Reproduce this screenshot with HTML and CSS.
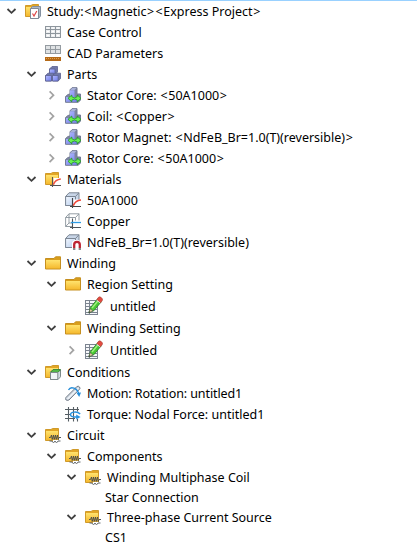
FILE: index.html
```html
<!DOCTYPE html>
<html lang="en">
<head>
<meta charset="utf-8">
<title>Study tree</title>
<link rel="stylesheet" href="styles.css">
</head>
<body>
<svg class="sprite" width="0" height="0" aria-hidden="true">
  <defs>
    <linearGradient id="gold" x1="0" y1="0" x2="0" y2="1"><stop offset="0" stop-color="#ffe36e"/><stop offset="1" stop-color="#f5b92e"/></linearGradient>
    <linearGradient id="blue" x1="0" y1="0" x2="1" y2="1"><stop offset="0" stop-color="#b4bcff"/><stop offset="1" stop-color="#6f7bea"/></linearGradient>
    <linearGradient id="face" x1="0" y1="0" x2="1" y2="1"><stop offset="0" stop-color="#f2f7ff"/><stop offset="1" stop-color="#b7cdec"/></linearGradient>
  </defs>
  <symbol id="open" viewBox="0 0 16 16"><path d="M3.5 6 7.5 9.8 11.5 6" fill="none" stroke="#404040" stroke-width="1.8"/></symbol>
  <symbol id="closed" viewBox="0 0 16 16"><path d="M5.6 4.3 9.5 8.2 5.6 12.1" fill="none" stroke="#a3a3a3" stroke-width="1.7"/></symbol>
  <symbol id="folder" viewBox="0 0 16 16"><path d="M.5 3.5H9L10.5 1.8H15.5V14H.5Z" fill="#d99e1c"/><path d="M.5 3.5H9L10.5 1.8H15.5V14H.5Z" fill="none" stroke="#c58f20"/><path d="M1 5H15V13.5H1Z" fill="url(#gold)"/></symbol>
  <symbol id="smallfolder" viewBox="0 0 16 16"><path d="M.5 2.5H6L7.5 1.5H13.5V13.5H.5Z" fill="#e2a625" stroke="#d09a2a"/><path d="M1 4H13V13H1Z" fill="url(#gold)"/></symbol>
  <symbol id="study" viewBox="0 0 16 16"><use href="#smallfolder"/><path d="M7.5 3.5H15.5V13L13.5 15.5H5.5V5.5Z" fill="#aeb9c6" stroke="#8390a0"/><path d="M5.5 5.5H13.5V15.5H5.5Z" fill="#fff" stroke="#7f8996"/><path d="M7.5 10.5 9 13 11.8 8" fill="none" stroke="#e04848" stroke-width="1.2"/></symbol>
  <symbol id="table" viewBox="0 0 16 16"><path d="M0 2H16V14H0Z" fill="#8e969d"/><path d="M1 3H5V5H1ZM6 3H10V5H6ZM11 3H15V5H11ZM1 6H5V9H1ZM6 6H10V9H6ZM11 6H15V9H11ZM1 10H5V13H1ZM6 10H10V13H6ZM11 10H15V13H11Z" fill="#eceef0"/><path d="M2 4H4M7 4H9M12 4H14M2 7.5H4M7 7.5H9M12 7.5H14M2 11.5H4M7 11.5H9M12 11.5H14" stroke="#fff"/></symbol>
  <symbol id="cad" viewBox="0 0 16 16"><path d="M0 0H16V9H0Z" fill="#949ba1"/><path d="M1 1H5V4H1ZM6 1H10V4H6ZM11 1H15V4H11ZM1 5H5V8H1ZM6 5H10V8H6ZM11 5H15V8H11Z" fill="#dfe2e4"/><path d="M0 12H16V16H0Z" fill="#b56a18"/><path d="M1 13.5H15" stroke="#e3a04c" stroke-width="1" stroke-dasharray="1 1"/></symbol>
  <symbol id="parts" viewBox="0 0 16 16"><g stroke="#5c6190" stroke-width=".8" stroke-linejoin="round"><path d="M4.5 3 7 .5H12.5V6L10 8.5H4.5Z" fill="#7079a8"/><path d="M4.5 3H10V8.5H4.5Z" fill="url(#blue)"/><path d="M.5 9.5 3 7.2H8.5V13L6.5 15H.5Z" fill="#7079a8"/><path d="M.5 9.5H6.5V15H.5Z" fill="url(#blue)"/><path d="M7.5 9.5 10 7.2H15.5V12.5L13.2 15H7.5Z" fill="#7079a8"/><path d="M7.5 9.5H13.2V15H7.5Z" fill="url(#blue)"/></g></symbol>
  <symbol id="part" viewBox="0 0 16 16"><path d="M.5 9.5 3 7.5 5 7V2.8L7 .7H12V7H15.5V13L13.3 15.3H.5Z" fill="#7c85a0" stroke="#727b96" stroke-linejoin="round"/><path d="M1 10H5V3.3H9.5V10H13V14.8H1Z" fill="url(#blue)"/><path d="M5.5 2.8 7.3 1.2H11.5L9.5 2.8Z" fill="#b9c0ee"/><path d="M3 11.3 6.8 8V9.8L9.5 10.8 12.2 9.8V8L16 11.3 12.2 14.8V13L9.5 12 6.8 13V14.8Z" fill="#6af052" stroke="#189018" stroke-width=".7"/></symbol>
  <symbol id="materials" viewBox="0 0 16 16"><use href="#smallfolder"/><path d="M8.5 7H16V14H8.5Z" fill="#fff"/><path d="M7.5 6V16M5 14.5H16" fill="none" stroke="#555" stroke-width="1.1"/><path d="M8.3 13.6Q10.3 8.6 15.8 8" fill="none" stroke="#f05040" stroke-width="1.6"/></symbol>
  <symbol id="cube" viewBox="0 0 16 16"><path d="M.6 4.5 4 .8H14V10L10.5 13.5H.6Z" fill="#c8d5e7" stroke="#7c8795"/><path d="M.6 4.5H10.5V13.5H.6Z" fill="url(#face)" stroke="#7c8795"/><path d="M10.5 4.5 14 .8" stroke="#7c8795"/></symbol>
  <symbol id="steel" viewBox="0 0 16 16"><use href="#cube"/><path d="M8.5 7.5H16V16H8.5Z" fill="#fff"/><path d="M7.5 6V16M5 14.5H16" fill="none" stroke="#444" stroke-width="1.1"/><path d="M8.3 13.6Q10.3 8.6 16 8" fill="none" stroke="#f14638" stroke-width="1.6"/></symbol>
  <symbol id="copper" viewBox="0 0 16 16"><path d="M.6 4.5 4 .8H14V10L10.5 13.5H.6V4.5H10.5V13.5M10.5 4.5 14 .8M4 .8V10H14M.6 13.5 4 10" fill="none" stroke="#8a949c" stroke-width=".9"/><path d="M8 7.5H16V16H8Z" fill="#fff"/><path d="M7.5 5.5V16M5 14.5H16" fill="none" stroke="#4c5358" stroke-width="1.1"/><path d="M6 9.5H16" stroke="#2e9de5" stroke-width="1.3"/></symbol>
  <symbol id="magnet" viewBox="0 0 16 16"><use href="#cube"/><path d="M7 8Q11 4 16 7.5V16H7Z" fill="#fff"/><path d="M9.2 14V10.6Q9.2 7.8 12 7.8T14.8 10.6V14" fill="none" stroke="#bd2534" stroke-width="2.3"/><path d="M9.2 14V16M14.8 14V16" stroke="#888" stroke-width="2.3"/></symbol>
  <symbol id="sheet" viewBox="0 0 18 20"><path d="M0 4H13V19H0Z" fill="#f6f7f9"/><path d="M0 4.5H13M0 7.5H13M0 10.5H13M0 13.5H13M0 16.5H13M0 18.5H13M.5 4V19M4.5 4V19M12.5 9V19" stroke="#7c8490" stroke-width="1"/><path d="M3.8 16.8 5.5 11.5 12.6 2.8 16.3 5.7 9 14.6Z" fill="#49c934" stroke="#267524" stroke-width=".8"/><path d="M7 12 14 3.6" stroke="#a4f181" stroke-width="1.4"/><path d="M3.8 16.8 5.2 12.8 8 15Z" fill="#f2d6a3" stroke="#555" stroke-width=".6"/><path d="M3.8 16.8 4.4 15.2 5.5 16Z" fill="#222"/><path d="M11.7 3.8 13.2 1.6Q14.2.2 16 1.3 18.4 3 17.2 4.8L15.5 6.8Z" fill="#e34c41" stroke="#a84539" stroke-width=".6"/><path d="M11.5 4 15.2 7" stroke="#ddd" stroke-width="1"/></symbol>
  <symbol id="conditions" viewBox="0 0 16 16"><use href="#smallfolder"/><path d="M5.5 8.3 8 5.7H15.5V12.8L13 15.5H5.5Z" fill="#d0dce2" stroke="#7c898a"/><path d="M5.5 8.3 8 5.7H15.5L13 8.3Z" fill="#5ac34f" stroke="#33852e"/><path d="M5.5 8.5H12.8V15.5H5.5Z" fill="#f0f5f6" stroke="#7c898a"/></symbol>
  <symbol id="motion" viewBox="0 0 16 16"><path d="M1 12.4 11.8 1.6Q13.4.6 14.5 2T14.4 4.4L4 15Q2 16 .8 14.7T1 12.4Z" fill="#cbd3dd" stroke="#68717d" stroke-width=".9"/><path d="M2.5 14 13.5 3" stroke="#f3f6fa" stroke-width="1.2"/><path d="M3.5 5Q5.2 1.7 9 3.2T14 9.5" fill="none" stroke="#248dda" stroke-width="1.4"/><path d="M11.6 8 14.2 12 16 7.6Z" fill="#248dda"/></symbol>
  <symbol id="torque" viewBox="0 0 16 16"><path d="M3.5 1V15.5M8.5 1V15.5M12.5 1V5.5M12.5 13V15.5M0 3.5H14M0 8.5H5M0 12.5H10" stroke="#555d63" stroke-width="1.1"/><path d="M15.2 8Q13 5.8 9.3 6.1 5.5 6.5 5.5 8.6T9.3 11H12" fill="none" stroke="#2993df" stroke-width="1.4"/><path d="M11.2 8.5 15.6 11 11.2 13.6Z" fill="#2993df"/></symbol>
  <symbol id="circuit" viewBox="0 0 16 16"><use href="#smallfolder"/><path d="M8 13H16V16H8Z" fill="#fff"/><path d="M4 10.5H5.5L6.5 8 7.2 12.5 8.5 8 9.2 12.5 10.5 8 11.2 12.5 12.5 8 13.2 12.5 14 10.5H16" fill="none" stroke="#44484c" stroke-width=".9"/><path d="M4.5 14H7Q7.5 15.5 8.5 15.5T10 14Q10.5 15.5 11.5 15.5T13 14H15.5" fill="none" stroke="#5e6469" stroke-width="1"/></symbol>
</svg>
<main class="tree">
  <div class="row l0"><svg class="arrow"><use href="#open"/></svg><svg class="icon"><use href="#study"/></svg><span>Study:<b>&lt;</b>Magnetic<b>&gt;</b><b>&lt;</b>Express Project<b>&gt;</b></span></div>
  <div class="row l1"><i class="arrow"></i><svg class="icon"><use href="#table"/></svg><span>Case Control</span></div>
  <div class="row l1"><i class="arrow"></i><svg class="icon"><use href="#cad"/></svg><span>CAD Parameters</span></div>
  <div class="row l1"><svg class="arrow"><use href="#open"/></svg><svg class="icon"><use href="#parts"/></svg><span>Parts</span></div>
  <div class="row l2"><svg class="arrow"><use href="#closed"/></svg><svg class="icon"><use href="#part"/></svg><span>Stator Core: <b>&lt;</b>50A1000<b>&gt;</b></span></div>
  <div class="row l2"><svg class="arrow"><use href="#closed"/></svg><svg class="icon"><use href="#part"/></svg><span>Coil: <b>&lt;</b>Copper<b>&gt;</b></span></div>
  <div class="row l2"><svg class="arrow"><use href="#closed"/></svg><svg class="icon"><use href="#part"/></svg><span>Rotor Magnet: <b>&lt;</b>NdFeB_Br=1.0(T)(reversible)<b>&gt;</b></span></div>
  <div class="row l2"><svg class="arrow"><use href="#closed"/></svg><svg class="icon"><use href="#part"/></svg><span>Rotor Core: <b>&lt;</b>50A1000<b>&gt;</b></span></div>
  <div class="row l1"><svg class="arrow"><use href="#open"/></svg><svg class="icon"><use href="#materials"/></svg><span>Materials</span></div>
  <div class="row l2"><i class="arrow"></i><svg class="icon"><use href="#steel"/></svg><span>50A1000</span></div>
  <div class="row l2"><i class="arrow"></i><svg class="icon"><use href="#copper"/></svg><span>Copper</span></div>
  <div class="row l2"><i class="arrow"></i><svg class="icon"><use href="#magnet"/></svg><span>NdFeB_Br=1.0(T)(reversible)</span></div>
  <div class="row l1"><svg class="arrow"><use href="#open"/></svg><svg class="icon"><use href="#folder"/></svg><span>Winding</span></div>
  <div class="row l2"><svg class="arrow"><use href="#open"/></svg><svg class="icon"><use href="#folder"/></svg><span>Region Setting</span></div>
  <div class="row l3 tall"><i class="arrow"></i><svg class="icon"><use href="#sheet"/></svg><span>untitled</span></div>
  <div class="row l2"><svg class="arrow"><use href="#open"/></svg><svg class="icon"><use href="#folder"/></svg><span>Winding Setting</span></div>
  <div class="row l3 tall"><svg class="arrow"><use href="#closed"/></svg><svg class="icon"><use href="#sheet"/></svg><span>Untitled</span></div>
  <div class="row l1"><svg class="arrow"><use href="#open"/></svg><svg class="icon"><use href="#conditions"/></svg><span>Conditions</span></div>
  <div class="row l2"><i class="arrow"></i><svg class="icon"><use href="#motion"/></svg><span class="snug">Motion: Rotation: untitled1</span></div>
  <div class="row l2"><i class="arrow"></i><svg class="icon"><use href="#torque"/></svg><span>Torque: Nodal Force: untitled1</span></div>
  <div class="row l1"><svg class="arrow"><use href="#open"/></svg><svg class="icon"><use href="#circuit"/></svg><span>Circuit</span></div>
  <div class="row l2"><svg class="arrow"><use href="#open"/></svg><svg class="icon"><use href="#circuit"/></svg><span>Components</span></div>
  <div class="row l3"><svg class="arrow"><use href="#open"/></svg><svg class="icon"><use href="#circuit"/></svg><span>Winding Multiphase Coil</span></div>
  <div class="row leaf"><span>Star Connection</span></div>
  <div class="row l3 low"><svg class="arrow"><use href="#open"/></svg><svg class="icon"><use href="#circuit"/></svg><span>Three-phase Current Source</span></div>
  <div class="row leaf"><span>CS1</span></div>
</main>
</body>
</html>
```
FILE: styles.css
```css
* { box-sizing: border-box; }
body { margin: 0; background: #fff; overflow: hidden; }
.sprite { display: block; }
.tree {
  height: 547px;
  border-top: 1px solid #99d1ff;
  font: 12.5px/21px "Noto Sans", "Open Sans", sans-serif;
  color: #000;
}
.row { display: flex; align-items: flex-start; height: 21px; white-space: pre; }
.row b { display: inline-block; width: 8.4px; font-weight: 400; text-align: center; }
.arrow { flex: none; width: 16px; height: 16px; margin: 2px 5px 0 0; }
.icon { flex: none; width: 16px; height: 16px; margin: 2px 6px 0 0; }
.l0 { padding-left: 4px; }
.l1 { padding-left: 24px; }
.l2 { padding-left: 44px; }
.l3 { padding-left: 64px; }
.tall { height: 23px; line-height: 23px; }
.tall .arrow { margin-top: 3px; }
.tall .icon { width: 18px; height: 20px; margin: 1px 7px 0 0; }
.leaf { height: 19px; line-height: 19px; padding-left: 105px; }
.snug { letter-spacing: -0.1px; }
```
